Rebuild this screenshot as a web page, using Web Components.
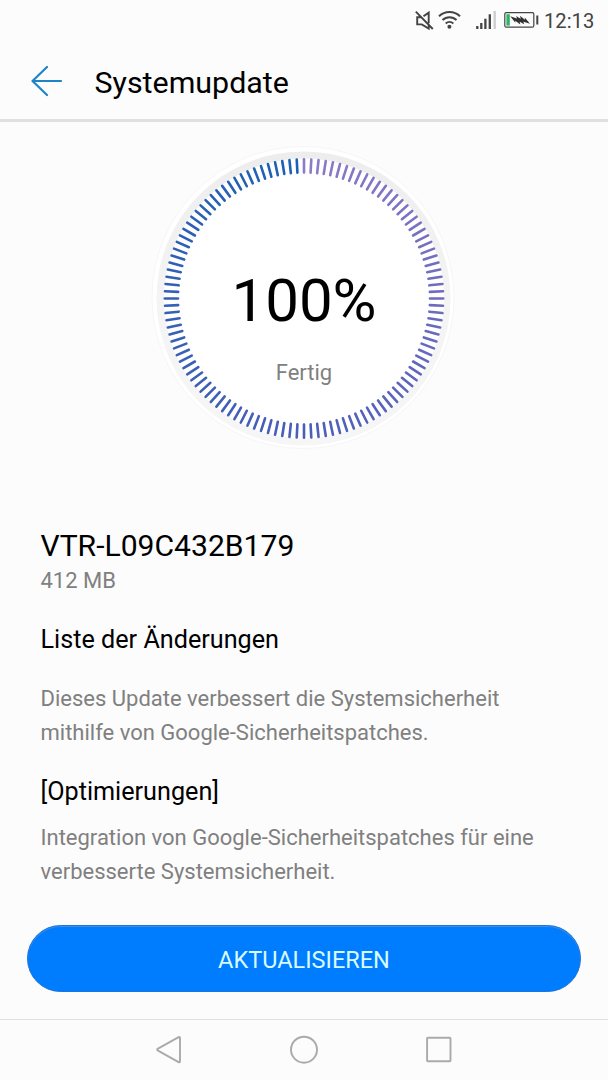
<!DOCTYPE html>
<html lang="de">
<head>
<meta charset="UTF-8">
<title>Systemupdate</title>
<style>
    body {
        margin: 0;
        background: #fcfcfc;
        font-family: Roboto, "Noto Sans", sans-serif;
        color: #000;
    }
</style>
</head>
<body>
<update-screen></update-screen>

<script>
class StatusBar extends HTMLElement {
    connectedCallback() {
        this.attachShadow({ mode: 'open' });
        this.shadowRoot.innerHTML = `
            <style>
                :host {
                    display: flex;
                    justify-content: flex-end;
                    align-items: center;
                    height: 42px;
                    padding-right: 14px;
                    box-sizing: border-box;
                    color: #444;
                }

                svg {
                    display: block;
                }

                .time {
                    width: 50px;
                    margin-left: 5px;
                    font-size: 20.2px;
                    line-height: 42px;
                    white-space: nowrap;
                }
            </style>
            <svg width="126" height="42" viewBox="413 0 126 42" fill="none" stroke="#444" stroke-width="1.7">
                <path d="M423.5 16.2l5.2-3.6v10.6M421 17.2h-3.8v7.2h4.6l6.9 4.2v-3M415.8 11.6l17 17.4" stroke-width="1.9"/>
                <path d="M439 16.2a15 15 0 0 1 21 0M442.5 20a10 10 0 0 1 14 0M445.7 23.5a5.6 5.6 0 0 1 7.6 0" stroke-width="2"/>
                <circle cx="449.4" cy="26.7" r="2" fill="#444" stroke="none"/>
                <path d="M477.3 26v3M481.3 23v6M485.4 18.7V29M489.8 14.3V29" stroke-width="2.3"/>
                <path d="M494.7 11v18" stroke="#ccc" stroke-width="2.3"/>
                <rect x="504.8" y="12.6" width="29" height="14.6" rx="1.5" stroke-width="1.2"/>
                <rect x="506.4" y="14.2" width="3.4" height="11.4" fill="#2db567" stroke="none"/>
                <path d="M510.2 16.2l6.8 2.4-.9-2.6 4.6 2.7-.7-2.9 5 4-.2-2.2 5.2 6.2-6.6-2.1.8 2.6-4.5-2.6.6 2.9-5-3.9.1 2z" fill="#333" stroke="none"/>
                <path d="M537.3 15.5v9" stroke-width="2"/>
            </svg>
            <span class="time"><slot></slot></span>
        `;
    }
}

class TitleBar extends HTMLElement {
    connectedCallback() {
        this.attachShadow({ mode: 'open' });
        this.shadowRoot.innerHTML = `
            <style>
                :host {
                    display: flex;
                    align-items: center;
                    gap: 32.5px;
                    height: 80px;
                    padding-left: 30px;
                    box-sizing: border-box;
                    border-bottom: 3px solid #e0e0e0;
                }

                svg {
                    display: block;
                }

                h1 {
                    margin: 4px 0 0;
                    font-size: 30.4px;
                    font-weight: 400;
                    line-height: 40px;
                }
            </style>
            <svg width="32" height="32" viewBox="0 0 32 32" fill="none" stroke="#1f83c9" stroke-width="2.2" stroke-linecap="round" stroke-linejoin="round">
                <path d="M31 16H2.5M17 2L2.5 16 17 30"/>
            </svg>
            <h1><slot></slot></h1>
        `;
    }
}

class ProgressDial extends HTMLElement {
    connectedCallback() {
        this.attachShadow({ mode: 'open' });
        this.shadowRoot.innerHTML = `
            <style>
                :host {
                    display: grid;
                    justify-items: center;
                    height: 320px;
                }

                svg,
                .label {
                    grid-area: 1 / 1;
                }

                .label {
                    display: flex;
                    flex-direction: column;
                    align-items: center;
                    padding-top: 128px;
                }

                .value {
                    font-size: 60px;
                    line-height: 70px;
                    white-space: nowrap;
                }

                .state {
                    margin-top: 22px;
                    font-size: 22px;
                    line-height: 30px;
                    color: #808080;
                }
            </style>
            <svg width="320" height="320" viewBox="144 138 320 320">
                <defs>
                    <linearGradient id="rim" x1="0" y1="0" x2="0" y2="1">
                        <stop offset="0" stop-color="#ededed"/>
                        <stop offset="0.5" stop-color="#f4f4f4"/>
                        <stop offset="1" stop-color="#f6f6f6"/>
                    </linearGradient>
                </defs>
                <circle cx="303" cy="297.5" r="151" fill="#fff" stroke="#f6f6f6"/>
                <circle cx="303.5" cy="298.5" r="147" fill="url(#rim)"/>
                <circle cx="304" cy="298.5" r="140" fill="#fff"/>
                <g id="ticks"></g>
            </svg>
            <div class="label">
                <span class="value"></span>
                <span class="state"><slot></slot></span>
            </div>
        `;

        this.shadowRoot.querySelector('.value').textContent = this.getAttribute('value') + '%';
        this.drawTicks();
    }

    // 120 ticks, clockwise from the top, fading from violet to blue
    drawTicks() {
        const from = [142, 122, 200];
        const mid = [76, 94, 184];
        const to = [28, 98, 180];
        let lines = '';
        for (let i = 0; i < 120; i++) {
            const t = i / 119;
            const a = t < 0.5 ? from : mid;
            const b = t < 0.5 ? mid : to;
            const k = t < 0.5 ? t * 2 : t * 2 - 1;
            const color = a.map((c, n) => Math.round(c + (b[n] - c) * k)).join(',');
            lines += `<line x1="304" y1="159.3" x2="304" y2="172.5" stroke="rgb(${color})" transform="rotate(${i * 3} 304 298.5)"/>`;
        }
        const ticks = this.shadowRoot.querySelector('#ticks');
        ticks.setAttribute('stroke-width', '2.6');
        ticks.setAttribute('stroke-linecap', 'round');
        ticks.innerHTML = lines;
    }
}

class UpdateNotes extends HTMLElement {
    connectedCallback() {
        this.attachShadow({ mode: 'open' });
        this.shadowRoot.innerHTML = `
            <style>
                :host {
                    display: block;
                    padding: 0 40.5px;
                }

                ::slotted(*) {
                    margin: 0;
                    font-weight: 400;
                }

                ::slotted(h2) {
                    font-size: 30.1px;
                    line-height: 40px;
                }

                ::slotted(h3) {
                    font-size: 25.2px;
                    line-height: 34px;
                }

                ::slotted(p) {
                    font-size: 22px;
                    line-height: 34px;
                    color: #808080;
                }

                ::slotted(.size) {
                    font-size: 22px;
                    line-height: 30px;
                    margin-bottom: 27px;
                }

                ::slotted(.intro) {
                    margin: 25px 0;
                }

                ::slotted(.detail) {
                    margin-top: 12px;
                }
            </style>
            <slot></slot>
        `;
    }
}

class PillButton extends HTMLElement {
    connectedCallback() {
        this.attachShadow({ mode: 'open' });
        this.shadowRoot.innerHTML = `
            <style>
                :host {
                    display: block;
                }

                button {
                    display: block;
                    width: 100%;
                    height: 67px;
                    padding: 2px 0 0;
                    border: 1px solid #1c74dc;
                    border-radius: 34px;
                    background: #007dff;
                    box-shadow: inset 0 1px 0 #3c8fea;
                    color: #d8fbff;
                    font-family: inherit;
                    font-size: 23.5px;
                }
            </style>
            <button><slot></slot></button>
        `;
    }
}

class NavBar extends HTMLElement {
    connectedCallback() {
        this.attachShadow({ mode: 'open' });
        this.shadowRoot.innerHTML = `
            <style>
                :host {
                    display: flex;
                    justify-content: center;
                    align-items: center;
                    gap: 105px;
                    height: 61px;
                    box-sizing: border-box;
                    border-top: 1px solid #e0e0e0;
                }

                svg {
                    display: block;
                    fill: none;
                    stroke: #aaa;
                    stroke-width: 1.9;
                    stroke-linejoin: round;
                }
            </style>
            <svg width="30" height="30" viewBox="0 0 30 30"><path d="M24.6 2.1L4 13.6q-1.7 1 0 2l20.6 11.5q1.4.7 1.4-.8V2.9q0-1.5-1.4-.8z"/></svg>
            <svg width="30" height="30" viewBox="0 0 30 30"><circle cx="15" cy="14.7" r="13"/></svg>
            <svg width="30" height="30" viewBox="0 0 30 30"><rect x="3.1" y="2.8" width="23.4" height="23.4" rx="0.7"/></svg>
        `;
    }
}

class UpdateScreen extends HTMLElement {
    connectedCallback() {
        this.attachShadow({ mode: 'open' });
        this.shadowRoot.innerHTML = `
            <style>
                :host {
                    display: flex;
                    flex-direction: column;
                    width: 608px;
                    height: 1080px;
                    overflow: hidden;
                }

                progress-dial {
                    margin-top: 16px;
                }

                update-notes {
                    margin-top: 68px;
                    flex: 1;
                }

                pill-button {
                    margin: 0 27px 27px;
                }
            </style>
            <status-bar>12:13</status-bar>
            <title-bar>Systemupdate</title-bar>
            <progress-dial value="100">Fertig</progress-dial>
            <update-notes>
                <h2>VTR-L09C432B179</h2>
                <p class="size">412 MB</p>
                <h3>Liste der Änderungen</h3>
                <p class="intro">Dieses Update verbessert die Systemsicherheit<br>mithilfe von Google-Sicherheitspatches.</p>
                <h3>[Optimierungen]</h3>
                <p class="detail">Integration von Google-Sicherheitspatches für eine<br>verbesserte Systemsicherheit.</p>
            </update-notes>
            <pill-button>AKTUALISIEREN</pill-button>
            <nav-bar></nav-bar>
        `;
    }
}

customElements.define('status-bar', StatusBar);
customElements.define('title-bar', TitleBar);
customElements.define('progress-dial', ProgressDial);
customElements.define('update-notes', UpdateNotes);
customElements.define('pill-button', PillButton);
customElements.define('nav-bar', NavBar);
customElements.define('update-screen', UpdateScreen);
</script>
</body>
</html>
